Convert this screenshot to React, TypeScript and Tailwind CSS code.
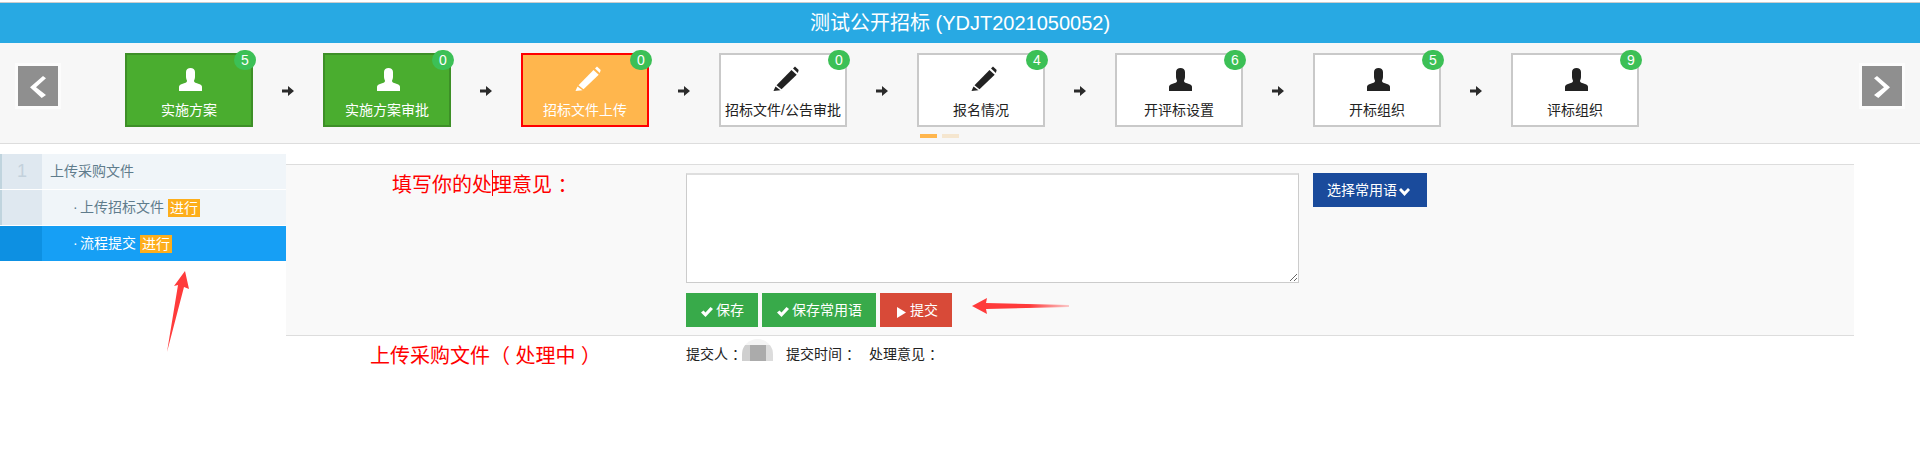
const steps = [
  { name: "实施方案", icon: "user", count: 5, tone: "done" },
  { name: "实施方案审批", icon: "user", count: 0, tone: "done" },
  { name: "招标文件上传", icon: "pencil", count: 0, tone: "active" },
  { name: "招标文件/公告审批", icon: "pencil", count: 0, tone: "idle" },
  { name: "报名情况", icon: "pencil", count: 4, tone: "idle" },
  { name: "开评标设置", icon: "user", count: 6, tone: "idle" },
  { name: "开标组织", icon: "user", count: 5, tone: "idle" },
  { name: "评标组织", icon: "user", count: 9, tone: "idle" },
];

const toneClass: Record<string, string> = {
  done: "bg-[#4aad2f] border-[#3d8f27] text-white",
  active: "bg-[#ffb64d] border-[#ff0000] text-white",
  idle: "bg-white border-[#c9c9c9] text-[#222]",
};

function StepIcon({ type }: { type: string }) {
  return (
    <svg width="40" height="36" viewBox="0 0 40 36" fill="currentColor" className="block ml-[43px]">
      {type === "user" ? (
        <path d="M16 12C16 9.5 18 8 20.5 8C23 8 25 9.5 25 12V17C25 19 24 20 24 21C24 22.5 26 23 29 24C31 24.7 32 25.5 32 27V31H9V27C9 25.5 10 24.7 12 24C15 23 17 22.5 17 21C17 20 16 19 16 17Z" />
      ) : (
        <>
          <path d="M27.5 10L32.7 14.7L17.5 29.3L12.5 25.3Z" />
          <path d="M29 8.6L31 6.6L34.7 10L33.8 12.9Z" />
          <path d="M11.5 26.6L16.5 30.3L9.5 31Z" />
        </>
      )}
    </svg>
  );
}

function NavButton({ flip }: { flip?: boolean }) {
  return (
    <button className="w-[46px] h-[46px] border-[3px] border-[#fcfcfc] bg-[#8f8f8f] mt-[20px] shrink-0">
      <svg width="40" height="40" viewBox="0 0 40 40" fill="#fff" className={flip ? "block -scale-x-100" : "block"}>
        <path d="M25 10L28 12.3L18 21.3L28 29L23.7 32L12 21.3Z" />
      </svg>
    </button>
  );
}

function Check() {
  return (
    <svg width="12" height="10" viewBox="0 0 12 10" fill="#fff" className="mt-[4px] mr-[3px]">
      <path d="M0 5.5L2.5 3.5L4.5 5.5L9.5 0L12 2L4.5 10Z" />
    </svg>
  );
}

function SideRow({ label, num, active }: { label: string; num?: string; active?: boolean }) {
  return (
    <div className={active ? "flex h-[35px] bg-[#169ff5] text-white" : "flex h-[35px] mb-px bg-[#f0f5f9] text-[#5f7c8c]"}>
      <div
        className={
          active
            ? "w-[42px] bg-[#0d90e2] flex items-center justify-center"
            : "w-[42px] bg-[#dfe8f0] border-l-2 border-[#c0d4de] flex items-center justify-center text-[18px] text-[#c3d1dc]"
        }
      >
        {num}
      </div>
      {label === "上传采购文件" ? (
        <div className="pl-[8px] leading-[34px]">{label}</div>
      ) : (
        <div className="pl-[31px] flex items-center">
          <span className="w-[7px]">·</span>
          <span>{label}</span>
          <span className="ml-[4px] w-[32px] h-[18px] bg-[#fdae1b] text-white text-center leading-[18px]">进行</span>
        </div>
      )}
    </div>
  );
}

export default function App() {
  return (
    <div className="relative w-[1920px] h-[454px] overflow-hidden bg-white pt-[2px] text-[14px] [text-spacing-trim:space-all] font-['Liberation_Sans','Noto_Sans_CJK_SC',sans-serif]">
      <div className="border-t border-[#cccccc] h-[41px] bg-[#28a9e3] text-white text-[20px] leading-[40px] text-center">
        测试公开招标 (YDJT2021050052)
      </div>

      <div className="flex h-[101px] bg-[#f7f7f7] border-b border-[#dddddd] pl-[15px] pr-[15px]">
        <NavButton />
        <div className="ml-[64px] pt-[10px]">
          <div className="flex">
            {steps.map((s, i) => (
              <div key={s.name} className="flex">
                <div className={`relative w-[128px] h-[74px] border-2 pt-[5px] ${toneClass[s.tone]}`}>
                  <StepIcon type={s.icon} />
                  <div className="text-center leading-[20px] mt-[4px] whitespace-nowrap">{s.name}</div>
                  <span className="absolute -top-[5px] -right-[5px] w-[22px] h-[20px] rounded-full bg-[#3cc056] text-white text-[14px] leading-[20px] text-center">
                    {s.count}
                  </span>
                </div>
                {i < steps.length - 1 && (
                  <div className="w-[70px] flex items-center justify-center pt-[2px] text-[#2b2b2b]">
                    <svg width="12" height="10" viewBox="0 0 12 10" fill="currentColor">
                      <path d="M0 3.5H6V0L12 5L6 10V6.5H0Z" />
                    </svg>
                  </div>
                )}
              </div>
            ))}
          </div>
          <div className="flex gap-[5px] ml-[795px] mt-[7px]">
            <span className="w-[17px] h-[4px] bg-[#ffb64d]" />
            <span className="w-[17px] h-[4px] bg-[#f5e6cf]" />
          </div>
        </div>
        <div className="ml-auto">
          <NavButton flip />
        </div>
      </div>

      <div className="flex">
        <div className="w-[286px] mt-[10px] shrink-0">
          <SideRow num="1" label="上传采购文件" />
          <SideRow label="上传招标文件" />
          <SideRow label="流程提交" active />
        </div>

        <div className="w-[1568px] mt-[20px]">
          <div className="flex h-[172px] bg-[#f9f9f9] border-y border-[#dddddd] pt-[8px]">
            <div className="w-[400px] pl-[106px] -mt-[2px] text-[20px] leading-[28px] text-[#ff0000] whitespace-nowrap">
              填写你的处理意见 ：
            </div>
            <div>
              <div className="flex items-start">
                <textarea className="block w-[613px] h-[110px] bg-white border border-[#cccccc] border-t-2 border-t-[#dedede] outline-none" />
                <button className="ml-[14px] w-[114px] h-[34px] bg-[#1a4b9c] text-white flex items-center pl-[14px]">
                  选择常用语
                  <svg width="11" height="8" viewBox="0 0 11 8" fill="#fff" className="ml-[2px] mt-[4px]">
                    <path d="M0 2L2 0L5.5 3.5L9 0L11 2L5.5 8Z" />
                  </svg>
                </button>
              </div>
              <div className="flex gap-[4px] mt-[10px] text-white">
                <button className="w-[72px] h-[34px] bg-[#38aa4a] flex items-center pl-[15px]">
                  <Check />
                  保存
                </button>
                <button className="w-[114px] h-[34px] bg-[#38aa4a] flex items-center pl-[15px]">
                  <Check />
                  保存常用语
                </button>
                <button className="w-[72px] h-[34px] bg-[#d84a38] flex items-center pl-[17px]">
                  <svg width="9" height="11" viewBox="0 0 9 11" fill="#fff" className="mt-[4px] mr-[4px]">
                    <path d="M0 0L9 5.5L0 11Z" />
                  </svg>
                  提交
                </button>
              </div>
            </div>
          </div>

          <div className="flex">
            <div className="w-[400px] pl-[84px] pt-[5px] text-[20px] leading-[30px] text-[#ff0000] whitespace-nowrap">
              上传采购文件（ 处理中 ）
            </div>
            <div className="flex pt-[8px] leading-[20px] text-[#222] whitespace-nowrap">
              <span className="w-[56px]">提交人 ：</span>
              <div className="w-[31px] h-[22px] -mt-[5px] rounded-t-full overflow-hidden bg-[#f4f4f4] pt-[6px]">
                <div className="flex h-[16px]">
                  <span className="w-[8px] bg-[#cfcfcf]" />
                  <span className="w-[16px] bg-[#ababab]" />
                  <span className="w-[7px] bg-[#dcdcdc]" />
                </div>
              </div>
              <span className="ml-[13px] w-[70px]">提交时间 ：</span>
              <span className="ml-[13px]">处理意见 ：</span>
            </div>
          </div>
        </div>
      </div>

      {/* annotations drawn over the screenshot */}
      <svg width="1920" height="454" className="absolute inset-0 pointer-events-none">
        <defs>
          <linearGradient id="fade" x1="972" y1="0" x2="1069" y2="0" gradientUnits="userSpaceOnUse">
            <stop offset="0.6" stopColor="#ff3b3b" />
            <stop offset="1" stopColor="#ff3b3b" stopOpacity="0.25" />
          </linearGradient>
        </defs>
        <path d="M167 352L178 285L174 286L185 271L189 289L184 287Z" fill="#ff3b3b" />
        <path d="M972 306L987 298L986 303L1069 305L1069 307L986 309L987 314Z" fill="url(#fade)" />
        <path d="M492.5 170V196" stroke="#ff0000" />
      </svg>
    </div>
  );
}
